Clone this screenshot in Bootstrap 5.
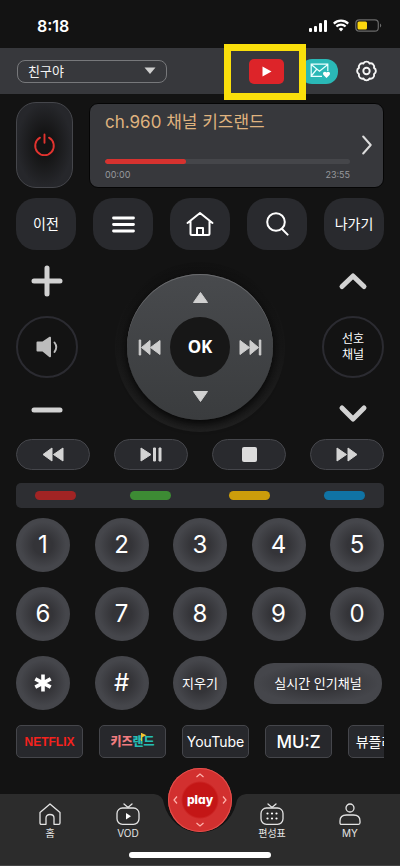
<!DOCTYPE html>
<html lang="ko" data-bs-theme="dark">
<head>
<meta charset="utf-8">
<meta name="viewport" content="width=device-width, initial-scale=1">
<title>리모컨</title>
<link href="https://cdn.jsdelivr.net/npm/bootstrap@5.3.0/dist/css/bootstrap.min.css" rel="stylesheet">
<style>
body{background:#131313;color:#fff;font-family:Inter,"Noto Sans CJK KR",sans-serif;font-size:14px;line-height:20px}
button{border:0;padding:0;color:inherit;background:none}
svg{display:block;flex:none}
.app-page{min-height:100vh}
.status-bar{height:48px;padding:3px 18px 0 37px;font-size:16px;font-weight:600}
.status-icons{gap:6px}
.top-bar{height:46px;background:#37383c;padding:0 23px 0 17px}
.device-select{width:150px;height:23px;border:1px solid #77787b;border-radius:8px;background-color:transparent;color:#f4f4f4;font-size:13px;line-height:20px;padding:0 24px 0 10px;
background-image:url("data:image/svg+xml,%3Csvg xmlns='http://www.w3.org/2000/svg' viewBox='0 0 12 8'%3E%3Cpath d='M.5.5h11L6 7z' fill='%23cfcfcf'/%3E%3C/svg%3E");background-size:12px 8px;background-position:right 10px center}
.yt-btn{width:35px;height:25px;border-radius:5px;background:#dd2429}
.yt-btn::after{content:"";position:absolute;inset:-15px -22px -16px -25px;border:7px solid #fadf0b;z-index:3;pointer-events:none}
.mail-btn{width:38px;height:25px;border-radius:12px;background:#2ab8b6;margin-left:16px;margin-right:18px;padding-left:3px}
.row-keys{margin-top:10px}
.row-dpad{margin-top:12px}
.row-media{margin-top:7px}
.power-btn{width:57px;height:86px;border:1px solid #45464b;border-radius:20px;background:radial-gradient(ellipse closest-side,#131313 25%,#26272b 100%)}
.now-card{height:85px;background:#37383c;border:1px solid #050505;border-radius:9px;padding:5px 11px 5px 15px}
.now-title{color:#dfb27e;font-size:17px;line-height:26px}
.now-track{height:5px;border-radius:3px;background:#45464a;--bs-progress-bar-bg:#d6322f}
.now-time{font-size:9px;line-height:14px;color:#98999c}
.soft-btn{width:60px;height:52px;border-radius:20px;background:#292a2e;font-size:14px}
.side-col{width:62px;height:170px;padding:3px 0}
.ring-btn{width:62px;height:62px;border:2px solid #2b2b31;border-radius:50%;font-size:12px;line-height:16px}
.dpad-rim{width:170px;height:170px;border-radius:50%;background:linear-gradient(#111,#161616 50%,#212121)}
.dpad{width:146px;height:146px;border-radius:50%;background:linear-gradient(#484a4d,#3a3c3e);box-shadow:inset 0 1px 0 #6a6b6e,0 4px 10px #050505;padding:11px}
.ok-btn{width:60px;height:60px;border-radius:50%;background:#171717;font:700 17px/24px "Noto Sans",sans-serif}
.media-btn{width:74px;height:31px;border:1px solid #45464b;border-radius:16px;background:#292a2e}
.colour-bar{height:25px;border-radius:5px;background:#2d2e32;padding:0 19px;margin:13px 0 10px}
.colour-pair{width:136px}
.colour-key{width:41px;height:9px;border-radius:5px}
.key-red{background:#a12424}.key-green{background:#3d8b34}.key-yellow{background:#cc9d0b}.key-blue{background:#1073a4}
.num-pad{display:grid;grid-template-columns:repeat(5,54px);justify-content:space-between;row-gap:15px}
.num-key{height:54px;border-radius:50%;background:radial-gradient(circle closest-side,#343438 35%,#45464b 85%);font-size:24px;font-weight:400;line-height:30px}
.num-word{font-size:13px}
.popular-btn{grid-column:4/6;justify-self:end;width:128px;height:41px;margin-right:2px;border-radius:20px;background:radial-gradient(ellipse closest-side,#343438 30%,#45464b 95%);font-size:13px}
.app-strip{gap:16px;margin-top:15px}
.app-btn{width:67px;height:33px;flex:none;border:1px solid #45464b;border-radius:5px;background:#27282c;font-size:14px;white-space:nowrap;overflow:hidden}
.app-netflix{color:#f5221d;font:700 12px/20px "Liberation Sans",sans-serif}
.app-kids{font-size:12px;font-weight:900;color:#ef7c7f}
.app-kids b{color:#25bdb4;font-weight:900}
.app-muz{font-size:17px;font-weight:500}
.kids-flag{left:41px;top:7px}
.tab-bar{height:72px;background:#2c2c2c;border-bottom:1px solid #444;padding:9px 11px 0}
.tab-notch{left:50%;top:0;transform:translateX(-50%)}
.tab-item{color:#e4e4e4;font-size:10px;line-height:14px;text-decoration:none;gap:1px}
.play-slot{width:66px}
.play-btn{width:64px;height:64px;border-radius:50%;top:-26px;left:50%;transform:translateX(-50%);background:radial-gradient(circle,#c41616 0 17px,#d2302f 19px);box-shadow:inset 0 0 0 1px #e4514e;padding:5px;z-index:2}
.play-word{font-size:12px;font-weight:800;line-height:14px;font-feature-settings:"cv11"}
.home-line{width:142px;height:6px;border-radius:3px;background:#fff;bottom:7px;left:50%;transform:translateX(-50%)}
</style>
<script src="https://cdn.jsdelivr.net/npm/bootstrap@5.3.0/dist/js/bootstrap.bundle.min.js"></script>
</head>
<body>
<div class="app-page d-flex flex-column overflow-hidden">
  <div class="status-bar d-flex align-items-center justify-content-between">
    <span>8:18</span>
    <div class="status-icons d-flex align-items-center">
      <svg width="18" height="12" viewBox="0 0 18 12" fill="#fff"><rect y="8" width="3" height="4" rx="1"/><rect x="5" y="6" width="3" height="6" rx="1"/><rect x="10" y="3" width="3" height="9" rx="1"/><rect x="15" width="3" height="12" rx="1"/></svg>
      <svg width="16" height="13" viewBox="0 0 16 13" fill="none" stroke="#fff" stroke-width="2.2"><path d="M.8 4.6a10.300 10.300 0 0 1 14.400 0M3.400 7.500a6.500 6.500 0 0 1 9.200 0"/><path d="M5.700 9.900a3.300 3.300 0 0 1 4.600 0L8 12.400z" fill="#fff" stroke="none"/></svg>
      <svg width="27" height="13" viewBox="0 0 27 13"><rect x=".8" y=".8" width="22.500" height="11.400" rx="3.500" fill="none" stroke="#6b6b6b" stroke-width="1.200"/><rect x="2.500" y="2.500" width="9.500" height="8" rx="1.500" fill="#fbd50e"/><path d="M25 4.500a2.300 2.300 0 0 1 0 4z" fill="#6b6b6b"/></svg>
    </div>
  </div>

  <header class="top-bar d-flex align-items-center">
    <select class="form-select device-select" aria-label="기기 선택"><option>친구야</option></select>
    <button type="button" class="yt-btn ms-auto position-relative d-flex align-items-center justify-content-center" aria-label="YouTube"><svg width="10" height="11" viewBox="0 0 10 11"><path d="M.5.5v10L9.500 5.500z" fill="#fff"/></svg></button>
    <button type="button" class="mail-btn d-flex align-items-center justify-content-center" aria-label="메시지">
      <svg width="21" height="16" viewBox="0 0 21 16" fill="none" stroke="#e9ffff" stroke-width="1.200"><path d="M12 13.300H1.200V1.200h16.600V8M1.200 1.500l8.300 6.800 8.300-6.800M1.200 13l5.300-6.500"/><path d="M16.500 15l-3-3c-1.700-2.600 1.500-4.400 3-2.400 1.500-2 4.700-.2 3 2.400z" fill="#fff" stroke="none"/></svg>
    </button>
    <button type="button" aria-label="설정"><svg width="21" height="22" viewBox="0 0 21 22" fill="none" stroke="#f5f5f5" stroke-width="1.900" stroke-linejoin="round"><path d="M18 7.900a3.500 3.500 0 0 1 0 6.200a3.500 3.500 0 0 1-4.400 4.400a3.500 3.500 0 0 1-6.200 0a3.500 3.500 0 0 1-4.400-4.400a3.500 3.500 0 0 1 0-6.200a3.500 3.500 0 0 1 4.400-4.400a3.500 3.500 0 0 1 6.200 0a3.500 3.500 0 0 1 4.400 4.400z"/><circle cx="10.500" cy="11" r="3.200"/></svg></button>
  </header>

  <main class="px-3 pt-2 d-flex flex-column">
    <div class="d-flex align-items-center gap-3">
      <button type="button" class="power-btn d-flex align-items-center justify-content-center flex-shrink-0" aria-label="전원"><svg width="23" height="24" viewBox="0 0 23 24" fill="none" stroke="#e2332f" stroke-width="1.900" stroke-linecap="round"><path d="M11.500 1.500v8.300M7 4.700a9.300 9.300 0 1 0 9 0"/></svg></button>
      <section class="now-card flex-grow-1 d-flex align-items-center">
        <div class="flex-grow-1 h-100 d-flex flex-column">
          <div class="now-title">ch.960 채널 키즈랜드</div>
          <div class="progress now-track mt-auto" role="progressbar" aria-label="재생 위치" aria-valuenow="33" aria-valuemin="0" aria-valuemax="100"><div class="progress-bar rounded-pill" style="width:33%"></div></div>
          <div class="now-time d-flex justify-content-between mt-1"><span>00:00</span><span>23:55</span></div>
        </div>
        <button type="button" class="ms-2 ps-1" aria-label="다음"><svg width="10" height="20" viewBox="0 0 10 20" fill="none" stroke="#dcdcdc" stroke-width="2" stroke-linecap="round" stroke-linejoin="round"><path d="M1.200 1.500L8.700 10 1.200 18.500"/></svg></button>
      </section>
    </div>

    <div class="row-keys d-flex justify-content-between">
      <button type="button" class="soft-btn">이전</button>
      <button type="button" class="soft-btn d-flex align-items-center justify-content-center" aria-label="메뉴"><svg width="23" height="17" viewBox="0 0 23 17" stroke="#fff" stroke-width="2.800" stroke-linecap="round"><path d="M1.500 2h20M1.500 8.500h20M1.500 15h20"/></svg></button>
      <button type="button" class="soft-btn d-flex align-items-center justify-content-center" aria-label="홈"><svg width="28" height="26" viewBox="0 0 28 26" fill="none" stroke="#fff" stroke-width="2" stroke-linecap="round" stroke-linejoin="round"><path d="M1.500 12L14 2l12.500 10M4.500 10v12.500q0 1.500 1.500 1.500h16q1.500 0 1.500-1.500V10M11 24v-7h6v7"/></svg></button>
      <button type="button" class="soft-btn d-flex align-items-center justify-content-center" aria-label="검색"><svg width="23" height="24" viewBox="0 0 23 24" fill="none" stroke="#fff" stroke-width="2" stroke-linecap="round"><circle cx="10" cy="10" r="8.800"/><path d="M15.800 16.800l5.800 5.800"/></svg></button>
      <button type="button" class="soft-btn">나가기</button>
    </div>

    <div class="row-dpad d-flex justify-content-between align-items-center">
      <div class="side-col d-flex flex-column align-items-center justify-content-between">
        <button type="button" aria-label="음량 올리기"><svg width="32" height="32" viewBox="0 0 32 32" stroke="#d2d2d2" stroke-width="5" stroke-linecap="round"><path d="M3 16h26M16 3v26"/></svg></button>
        <button type="button" class="ring-btn d-flex align-items-center justify-content-center" aria-label="음소거"><svg width="23" height="22" viewBox="0 0 23 22"><path d="M1.500 5.500h5L13.500.8q1.500-.6 1.500 1v18.400q0 1.600-1.500 1l-7-5.700h-5Q.5 15.500.5 14.500v-8q0-1 1-1z" fill="#bcbcbc"/><path d="M18.500 6.500q3.500 4.500 0 9.500" fill="none" stroke="#bcbcbc" stroke-width="1.900" stroke-linecap="round"/></svg></button>
        <button type="button" aria-label="음량 내리기"><svg width="32" height="32" viewBox="0 0 32 32" stroke="#d2d2d2" stroke-width="5" stroke-linecap="round"><path d="M3 13h26"/></svg></button>
      </div>
      <div class="dpad-rim d-flex align-items-center justify-content-center">
        <div class="dpad d-flex flex-column align-items-center justify-content-between">
          <button type="button" class="mt-1" aria-label="위"><svg width="17" height="17" viewBox="0 0 17 17"><path d="M8.500 3.500L15.500 13.500H1.500z" fill="#d0d0d0" stroke="#d0d0d0" stroke-linejoin="round"/></svg></button>
          <div class="w-100 d-flex align-items-center justify-content-between">
            <button type="button" aria-label="이전 채널"><svg width="23" height="17" viewBox="0 0 23 17" fill="#cfcfcf" stroke="#cfcfcf" stroke-linejoin="round"><path d="M1.200 1v15h1.500V1zM12 1.500v14l-8.500-7zM22 1.500v14l-9.500-7z"/></svg></button>
            <button type="button" class="ok-btn">OK</button>
            <button type="button" aria-label="다음 채널"><svg width="23" height="17" viewBox="0 0 23 17" fill="#cfcfcf" stroke="#cfcfcf" stroke-linejoin="round"><path d="M21.800 1v15h-1.500V1zM11 1.500v14l8.500-7zM1 1.500v14l9.500-7z"/></svg></button>
          </div>
          <button type="button" class="mb-1" aria-label="아래"><svg width="17" height="17" viewBox="0 0 17 17"><path d="M8.500 13.500L1.500 3.500h14z" fill="#d0d0d0" stroke="#d0d0d0" stroke-linejoin="round"/></svg></button>
        </div>
      </div>
      <div class="side-col d-flex flex-column align-items-center justify-content-between">
        <button type="button" aria-label="채널 올리기"><svg width="32" height="32" viewBox="0 0 32 32" fill="none" stroke="#d2d2d2" stroke-width="5" stroke-linecap="round" stroke-linejoin="round"><path d="M5 21.500L16 11l11 10.500"/></svg></button>
        <button type="button" class="ring-btn">선호<br>채널</button>
        <button type="button" aria-label="채널 내리기"><svg width="32" height="32" viewBox="0 0 32 32" fill="none" stroke="#d2d2d2" stroke-width="5" stroke-linecap="round" stroke-linejoin="round"><path d="M5 11l11 11 11-11"/></svg></button>
      </div>
    </div>

    <div class="row-media d-flex justify-content-between">
      <button type="button" class="media-btn d-flex align-items-center justify-content-center" aria-label="되감기"><svg width="22" height="15" viewBox="0 0 22 15" fill="#d4d4d4" stroke="#d4d4d4" stroke-linejoin="round"><path d="M10 1v13L1 7.500zM21 1v13l-9.500-6.500z"/></svg></button>
      <button type="button" class="media-btn d-flex align-items-center justify-content-center" aria-label="재생/일시정지"><svg width="22" height="15" viewBox="0 0 22 15" fill="#d4d4d4" stroke="#d4d4d4" stroke-linejoin="round"><path d="M1 1v13l10-6.500zM13.500 1v13h2V1zM19 1v13h2V1z"/></svg></button>
      <button type="button" class="media-btn d-flex align-items-center justify-content-center" aria-label="정지"><svg width="15" height="15" viewBox="0 0 15 15"><rect width="15" height="15" rx="2" fill="#dcdcdc"/></svg></button>
      <button type="button" class="media-btn d-flex align-items-center justify-content-center" aria-label="빨리 감기"><svg width="22" height="15" viewBox="0 0 22 15" fill="#d4d4d4" stroke="#d4d4d4" stroke-linejoin="round"><path d="M1 1v13l9.500-6.500zM12 1v13l9-6.500z"/></svg></button>
    </div>

    <div class="colour-bar d-flex align-items-center justify-content-between">
      <div class="colour-pair d-flex justify-content-between"><button type="button" class="colour-key key-red" aria-label="빨강"></button><button type="button" class="colour-key key-green" aria-label="초록"></button></div>
      <div class="colour-pair d-flex justify-content-between"><button type="button" class="colour-key key-yellow" aria-label="노랑"></button><button type="button" class="colour-key key-blue" aria-label="파랑"></button></div>
    </div>

    <div class="num-pad">
      <button type="button" class="num-key">1</button><button type="button" class="num-key">2</button><button type="button" class="num-key">3</button><button type="button" class="num-key">4</button><button type="button" class="num-key">5</button>
      <button type="button" class="num-key">6</button><button type="button" class="num-key">7</button><button type="button" class="num-key">8</button><button type="button" class="num-key">9</button><button type="button" class="num-key">0</button>
      <button type="button" class="num-key d-flex align-items-center justify-content-center" aria-label="별표"><svg width="18" height="18" viewBox="0 0 18 18" stroke="#fff" stroke-width="3.600"><path d="M9 .5v17M1.300 4.800l15.400 8.400M1.300 13.200l15.400-8.400"/></svg></button>
      <button type="button" class="num-key">#</button>
      <button type="button" class="num-key num-word">지우기</button>
      <button type="button" class="popular-btn align-self-center">실시간 인기채널</button>
    </div>

    <div class="app-strip d-flex overflow-hidden">
      <button type="button" class="app-btn app-netflix">NETFLIX</button>
      <button type="button" class="app-btn app-kids position-relative">키즈<b>랜드</b><svg class="kids-flag position-absolute" width="6" height="8" viewBox="0 0 6 8"><path d="M.5 0v8" stroke="#f4c430"/><path d="M.5 0L5.500 2.200.5 4.500z" fill="#f4c430"/></svg></button>
      <button type="button" class="app-btn">YouTube</button>
      <button type="button" class="app-btn app-muz">MU:Z</button>
      <button type="button" class="app-btn">뷰플레이</button>
    </div>
  </main>

  <nav class="tab-bar position-relative d-flex align-items-start mt-auto">
    <svg class="tab-notch position-absolute" width="100" height="46" viewBox="0 0 100 46"><path d="M4 0Q13 1 14 10A37 37 0 0 0 86 10Q87 1 96 0Z" fill="#131313"/></svg>
    <a href="#" class="tab-item flex-fill w-25 d-flex flex-column align-items-center"><svg width="22" height="22" viewBox="0 0 22 22" fill="none" stroke="#e4e4e4" stroke-width="1.300" stroke-linejoin="round"><path d="M1 9.500L11 1l10 8.500V20q0 1.300-1.300 1.300H15V15q0-3.500-4-3.500T7 15v6.300H2.300Q1 21.300 1 20z"/></svg>홈</a>
    <a href="#" class="tab-item flex-fill w-25 d-flex flex-column align-items-center"><svg width="24" height="22" viewBox="0 0 24 22" fill="none" stroke="#e4e4e4" stroke-width="1.300" stroke-linecap="round"><rect x="1" y="5" width="22" height="16.300" rx="5.500"/><path d="M8 1l4 3.500L16 1"/><path d="M10 10v6.500l5-3.200z" fill="#fff" stroke="none"/></svg>VOD</a>
    <div class="play-slot flex-shrink-0"></div>
    <a href="#" class="tab-item flex-fill w-25 d-flex flex-column align-items-center"><svg width="24" height="22" viewBox="0 0 24 22" fill="none" stroke="#e4e4e4" stroke-width="1.300" stroke-linecap="round"><rect x="1" y="5" width="22" height="16.300" rx="5.500"/><path d="M8 1l4 3.500L16 1"/><path d="M7.500 10.500h.01M12 10.500h.01M16.500 10.500h.01M7.500 15.500h.01M12 15.500h.01M16.500 15.500h.01" stroke="#fff" stroke-width="2.200"/></svg>편성표</a>
    <a href="#" class="tab-item flex-fill w-25 d-flex flex-column align-items-center"><svg width="22" height="22" viewBox="0 0 22 22" fill="none" stroke="#e4e4e4" stroke-width="1.300" stroke-linejoin="round"><circle cx="11" cy="5" r="4"/><path d="M7.500 12h7q6.500 0 6.500 6v1.800q0 1.500-1.500 1.500h-17Q1 21.300 1 19.800V18q0-6 6.500-6z"/></svg>MY</a>
    <button type="button" class="play-btn position-absolute d-flex flex-column align-items-center justify-content-between" aria-label="play">
      <svg width="8" height="5" viewBox="0 0 8 5" fill="none" stroke="#ffb3ad" stroke-width="1.200"><path d="M.5 4L4 1l3.500 3"/></svg>
      <span class="w-100 d-flex align-items-center justify-content-between"><svg width="5" height="8" viewBox="0 0 5 8" fill="none" stroke="#ffb3ad" stroke-width="1.200"><path d="M4 .5L1 4l3 3.500"/></svg><span class="play-word">play</span><svg width="5" height="8" viewBox="0 0 5 8" fill="none" stroke="#ffb3ad" stroke-width="1.200"><path d="M1 .5L4 4 1 7.500"/></svg></span>
      <svg width="8" height="5" viewBox="0 0 8 5" fill="none" stroke="#ffb3ad" stroke-width="1.200"><path d="M.5 1L4 4l3.500-3"/></svg>
    </button>
    <div class="home-line position-absolute"></div>
  </nav>
</div>
</body>
</html>
